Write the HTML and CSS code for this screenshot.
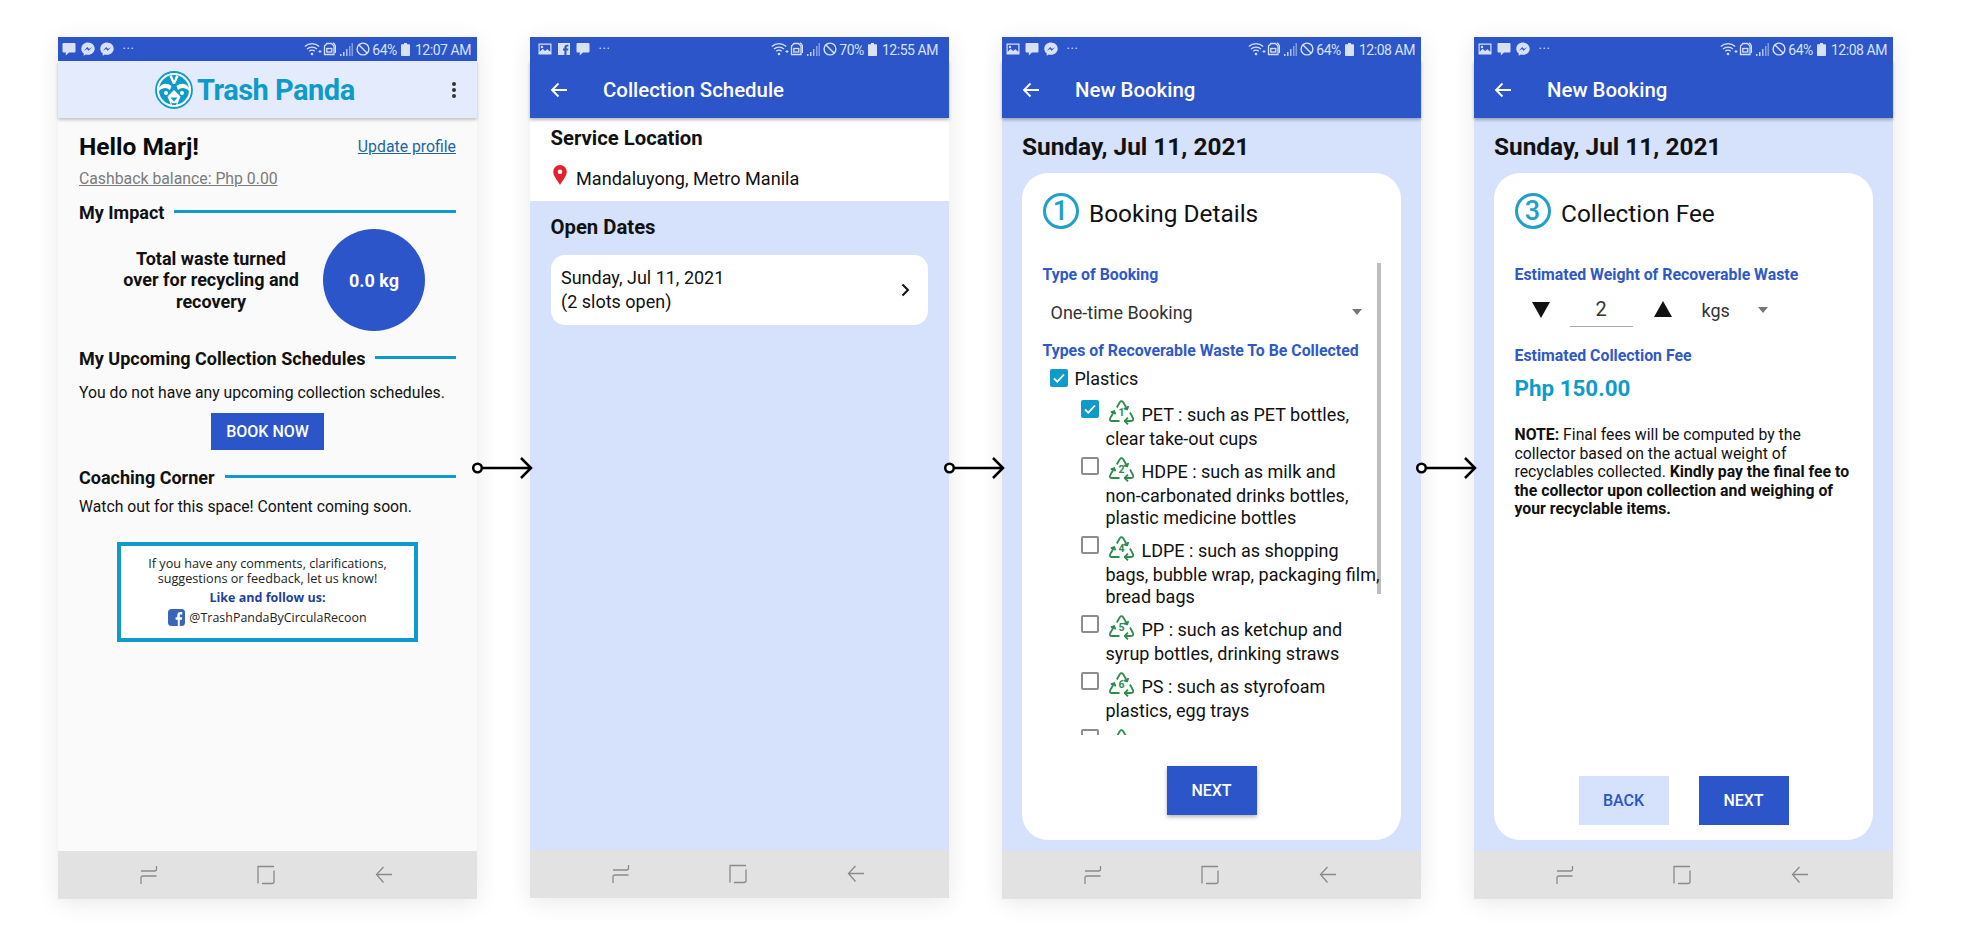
FILE: index.html
```html
<!DOCTYPE html>
<html lang="en">
<head>
<meta charset="utf-8">
<title>Trash Panda screens</title>
<link rel="stylesheet" href="styles.css">
</head>
<body>
<svg class="defs" aria-hidden="true">
  <symbol id="i-chat" viewBox="0 0 14 14"><path d="M1.500 1h11a1 1 0 0 1 1 1v7.500a1 1 0 0 1-1 1H7L3.800 13.600v-3.100H1.500a1 1 0 0 1-1-1V2a1 1 0 0 1 1-1z"/></symbol>
  <symbol id="i-msg" viewBox="0 0 14 14"><path fill-rule="evenodd" d="M7 .6C3.200.6.3 3.300.3 6.800c0 2 .9 3.600 2.400 4.700v2.200l2.200-1.200c.7.2 1.400.3 2.100.3 3.800 0 6.700-2.700 6.700-6S10.800.6 7 .6zM7.700 8.800 6 7 2.800 8.800 6.300 5.100 8 6.900l3.200-1.800z"/></symbol>
  <symbol id="i-img" viewBox="0 0 14 14"><path fill-rule="evenodd" d="M.5 1.500h13v11H.5zM1.700 2.700v7.100l3-3 2.300 2.300 2.300-1.800 3 2.400V2.700zM4 3.800a1.200 1.200 0 1 1 0 2.400 1.200 1.200 0 0 1 0-2.400z"/></symbol>
  <symbol id="i-fb" viewBox="0 0 14 14"><path fill-rule="evenodd" d="M1 1h12v12H9.500V8.500h1.600l.3-1.900H9.500V5.400c0-.6.2-.9.9-.9h1V2.800H10c-1.800 0-2.600 1-2.600 2.500v1.300H6v1.900h1.400V13H1z"/></symbol>
  <symbol id="i-wifi" viewBox="0 0 18 14"><g fill="none" stroke="currentColor" stroke-width="1.200"><path d="M.8 4.500C5 .6 11 .6 15.200 4.500"/><path d="M3 7c2.900-2.600 7.100-2.600 10 0"/><path d="M5.200 9.300c1.700-1.400 3.900-1.400 5.600 0"/></g><circle cx="8" cy="12" r="1.300" fill="currentColor"/><path d="M14.500 9.500h3M16 8v3" stroke="currentColor" fill="none" stroke-width="1"/></symbol>
  <symbol id="i-sim" viewBox="0 0 13 14"><g fill="none" stroke="currentColor" stroke-width="1.300"><path d="M4 1.500h4.500l2.500 2.500v8.500H1.500V4z"/><rect x="3.800" y="6.500" width="5" height="3.500"/><path d="M10 .8c1.300.6 2.200 1.700 2.400 3.200v7"/></g></symbol>
  <symbol id="i-sig" viewBox="0 0 13 13"><path d="M0 11h1.500v2H0z" opacity=".9"/><path d="M3 9h1.500v4H3z" opacity=".9"/><path d="M6 6h1.500v7H6z" opacity=".75"/><path d="M9 3h1.500v10H9z" opacity=".55"/><path d="M11.500 0H13v13h-1.500z" opacity=".5"/></symbol>
  <symbol id="i-block" viewBox="0 0 14 14"><g fill="none" stroke="currentColor" stroke-width="1.400"><circle cx="7" cy="7" r="5.900"/><path d="M3 3l8 8"/></g></symbol>
  <symbol id="i-batt" viewBox="0 0 9 13"><path d="M3 0h3v1.200h2.200a.8.8 0 0 1 .8.800v10.200a.8.8 0 0 1-.8.800H.8a.8.8 0 0 1-.8-.8V2a.8.8 0 0 1 .8-.8H3z"/></symbol>
  <symbol id="i-back" viewBox="0 0 18 16"><path d="M17 8H2M8.500 1.500 2 8l6.500 6.500" fill="none" stroke="currentColor" stroke-width="1.800"/></symbol>
  <symbol id="i-recents" viewBox="0 0 18 20"><path d="M1 6h13.500q2 0 2-2V1M16.500 11H3q-2 0-2 2v6" fill="none" stroke="currentColor" stroke-width="1.300"/></symbol>
  <symbol id="i-home" viewBox="0 0 18 20"><path d="M1 18.500V1.500H17M17 5.500V16.500q0 2-2 2H5" fill="none" stroke="currentColor" stroke-width="1.300"/></symbol>
  <symbol id="i-navback" viewBox="0 0 18 20"><path d="M17 9.500H2M8.500 2 1.500 9.500l7 8" fill="none" stroke="currentColor" stroke-width="1.300"/></symbol>
  <symbol id="i-rec" viewBox="0 0 25 26"><g fill="none" stroke="currentColor" stroke-width="1.800" stroke-linejoin="round"><path d="M7.800 7.500 10.800 2.200q1.700-2.200 3.400 0l3.800 6.600"/><path d="M14.700 8.400l3.500 1 1.100-3.400"/><path d="M21 12.500l3 5.500q1 3-2 3H16.500"/><path d="M19 17.700 15.700 21l3.300 3.300"/><path d="M10.500 21H3q-3 0-1.700-3L5 11.500"/><path d="M1.800 12.300 5.200 11l1.200 3.400"/></g></symbol>
</svg>

<main class="board">

  <section class="phone phone-home">
    <div class="status">
      <div class="status-left">
        <svg class="si"><use href="#i-chat"/></svg><svg class="si"><use href="#i-msg"/></svg><svg class="si"><use href="#i-msg"/></svg><span class="dots">•••</span>
      </div>
      <div class="status-right">
        <svg class="si-wifi"><use href="#i-wifi"/></svg><svg class="si-sim"><use href="#i-sim"/></svg><svg class="si-sig"><use href="#i-sig"/></svg><svg class="si-block"><use href="#i-block"/></svg><span class="pct">64%</span><svg class="si-batt"><use href="#i-batt"/></svg><span class="clock">12:07 AM</span>
      </div>
    </div>
    <header class="brandbar">
      <svg class="logo" viewBox="0 0 38 38" aria-hidden="true">
        <circle cx="19" cy="19" r="18" fill="#fff" stroke="#0f9bca" stroke-width="1.800"/>
        <circle cx="19" cy="19" r="15" fill="#0f9bca"/>
        <path d="M14.500 5.500 18 13h2l3.500-7.500-2.300-1.200L19 10l-2.200-5.700z" fill="#fff"/>
        <path d="M3.800 17C7 12 12 11.500 16.500 15L15 19c-3-2.500-7-3-11 1zM34.200 17C31 12 26 11.500 21.500 15L23 19c3-2.500 7-3 11 1z" fill="#fff"/>
        <path d="M19 19 25.500 25.500 22 34H16L12.500 25.500z" fill="#fff"/>
        <path d="M15.500 26.500h7L19 30.500z" fill="#0f9bca"/>
        <path d="M16 31.500c1.500 1 4.500 1 6 0l-1 2.500h-4z" fill="#0f9bca"/>
        <circle cx="11" cy="22" r="2" fill="#fff"/><circle cx="27" cy="22" r="2" fill="#fff"/>
      </svg>
      <span class="brandname">Trash Panda</span>
      <span class="kebab"><i></i><i></i><i></i></span>
    </header>
    <div class="home-body">
      <div class="hello-row">
        <h1 class="hello">Hello Marj!</h1>
        <a class="update">Update profile</a>
      </div>
      <p class="cashback">Cashback balance: Php 0.00</p>
      <h2 class="rule-head rule-first"><span>My Impact</span></h2>
      <div class="impact">
        <p class="impact-text">Total waste turned<br>over for recycling and<br>recovery</p>
        <div class="impact-circle">0.0 kg</div>
      </div>
      <h2 class="rule-head"><span>My Upcoming Collection Schedules</span></h2>
      <p class="para para-up">You do not have any upcoming collection schedules.</p>
      <button class="btn-book">BOOK NOW</button>
      <h2 class="rule-head"><span>Coaching Corner</span></h2>
      <p class="para para-watch">Watch out for this space! Content coming soon.</p>
      <div class="promo">
        <p>If you have any comments, clarifications,<br>suggestions or feedback, let us know!</p>
        <p class="promo-like">Like and follow us:</p>
        <p class="promo-fb">
          <svg class="fb" viewBox="0 0 17 17" aria-hidden="true"><rect width="17" height="17" rx="3.500" fill="#3a66b8"/><path d="M11.800 17v-6.300h2l.4-2.500h-2.400V6.700c0-.8.300-1.200 1.200-1.200h1.300V3.200c-.5 0-1.200-.1-1.900-.1-2 0-3.100 1.200-3.100 3.300v1.800H7.600v2.500h2.200V17z" fill="#fff"/></svg>
          <span>@TrashPandaByCirculaRecoon</span>
        </p>
      </div>
    </div>
    <nav class="navbar"><svg class="ni"><use href="#i-recents"/></svg><svg class="ni"><use href="#i-home"/></svg><svg class="ni"><use href="#i-navback"/></svg></nav>
  </section>

  <div class="link"><svg viewBox="0 0 58 24" class="link-svg" aria-hidden="true"><circle cx="5.500" cy="12" r="4.300" fill="#fff" stroke="#000" stroke-width="2.500"/><path d="M10 12c10 .3 20-.3 48 0M49 2l10 10-10 10" fill="none" stroke="#000" stroke-width="2.500"/></svg></div>

  <section class="phone phone-tint phone-short">
    <div class="status status-alt">
      <div class="status-left">
        <svg class="si"><use href="#i-img"/></svg><svg class="si"><use href="#i-fb"/></svg><svg class="si"><use href="#i-chat"/></svg><span class="dots">•••</span>
      </div>
      <div class="status-right">
        <svg class="si-wifi"><use href="#i-wifi"/></svg><svg class="si-sim"><use href="#i-sim"/></svg><svg class="si-sig"><use href="#i-sig"/></svg><svg class="si-block"><use href="#i-block"/></svg><span class="pct">70%</span><svg class="si-batt"><use href="#i-batt"/></svg><span class="clock">12:55 AM</span>
      </div>
    </div>
    <header class="appbar"><svg class="back"><use href="#i-back"/></svg><span class="appbar-title">Collection Schedule</span></header>
    <div class="loc">
      <h2 class="sub-head">Service Location</h2>
      <p class="loc-row">
        <svg class="pin" viewBox="0 0 14 20" aria-hidden="true"><path fill-rule="evenodd" d="M7 0a6.800 6.800 0 0 1 6.800 6.800C13.800 11 9.500 15.500 7 20 4.500 15.500.2 11 .2 6.800A6.800 6.800 0 0 1 7 0zm0 4.500a2.300 2.300 0 1 0 0 4.600 2.300 2.300 0 0 0 0-4.600z" fill="#e5202e"/></svg>
        <span>Mandaluyong, Metro Manila</span>
      </p>
    </div>
    <div class="dates">
      <h2 class="sub-head">Open Dates</h2>
      <div class="date-card">
        <p>Sunday, Jul 11, 2021<br>(2 slots open)</p>
        <svg class="chev" viewBox="0 0 9 14" aria-hidden="true"><path d="M1.500 1.500 7 7l-5.500 5.500" fill="none" stroke="#111" stroke-width="2"/></svg>
      </div>
    </div>
    <nav class="navbar"><svg class="ni"><use href="#i-recents"/></svg><svg class="ni"><use href="#i-home"/></svg><svg class="ni"><use href="#i-navback"/></svg></nav>
  </section>

  <div class="link"><svg viewBox="0 0 58 24" class="link-svg" aria-hidden="true"><circle cx="5.500" cy="12" r="4.300" fill="#fff" stroke="#000" stroke-width="2.500"/><path d="M10 12c10 .3 20-.3 48 0M49 2l10 10-10 10" fill="none" stroke="#000" stroke-width="2.500"/></svg></div>

  <section class="phone phone-tint">
    <div class="status">
      <div class="status-left">
        <svg class="si"><use href="#i-img"/></svg><svg class="si"><use href="#i-chat"/></svg><svg class="si"><use href="#i-msg"/></svg><span class="dots">•••</span>
      </div>
      <div class="status-right">
        <svg class="si-wifi"><use href="#i-wifi"/></svg><svg class="si-sim"><use href="#i-sim"/></svg><svg class="si-sig"><use href="#i-sig"/></svg><svg class="si-block"><use href="#i-block"/></svg><span class="pct">64%</span><svg class="si-batt"><use href="#i-batt"/></svg><span class="clock">12:08 AM</span>
      </div>
    </div>
    <header class="appbar"><svg class="back"><use href="#i-back"/></svg><span class="appbar-title">New Booking</span></header>
    <h1 class="date-title">Sunday, Jul 11, 2021</h1>
    <div class="card card-one">
      <div class="step-head"><span class="step-num">1</span><span class="step-title">Booking Details</span></div>
      <h3 class="field-label label-first">Type of Booking</h3>
      <div class="select"><span>One-time Booking</span><i class="caret"></i></div>
      <h3 class="field-label label-types">Types of Recoverable Waste To Be Collected</h3>
      <div class="waste-list">
        <div class="plastics"><span class="cb cb-on"><svg viewBox="0 0 18 18" aria-hidden="true"><path d="M4 9.500l3.300 3.200L14 5.500" fill="none" stroke="#fff" stroke-width="1.800"/></svg></span><span>Plastics</span></div>
        <div class="waste"><span class="cb cb-on"><svg viewBox="0 0 18 18" aria-hidden="true"><path d="M4 9.500l3.300 3.200L14 5.500" fill="none" stroke="#fff" stroke-width="1.800"/></svg></span>
          <p><svg class="rec" viewBox="0 0 25 26" aria-hidden="true"><use href="#i-rec"/><text x="12.500" y="16" class="rec-num">1</text></svg>PET : such as PET bottles,<br>clear take-out cups</p></div>
        <div class="waste"><span class="cb"></span>
          <p><svg class="rec" viewBox="0 0 25 26" aria-hidden="true"><use href="#i-rec"/><text x="12.500" y="16" class="rec-num">2</text></svg>HDPE : such as milk and<br>non-carbonated drinks bottles,<br>plastic medicine bottles</p></div>
        <div class="waste"><span class="cb"></span>
          <p><svg class="rec" viewBox="0 0 25 26" aria-hidden="true"><use href="#i-rec"/><text x="12.500" y="16" class="rec-num">4</text></svg>LDPE : such as shopping<br>bags, bubble wrap, packaging film,<br>bread bags</p></div>
        <div class="waste"><span class="cb"></span>
          <p><svg class="rec" viewBox="0 0 25 26" aria-hidden="true"><use href="#i-rec"/><text x="12.500" y="16" class="rec-num">5</text></svg>PP : such as ketchup and<br>syrup bottles, drinking straws</p></div>
        <div class="waste"><span class="cb"></span>
          <p><svg class="rec" viewBox="0 0 25 26" aria-hidden="true"><use href="#i-rec"/><text x="12.500" y="16" class="rec-num">6</text></svg>PS : such as styrofoam<br>plastics, egg trays</p></div>
        <div class="waste"><span class="cb"></span>
          <p><svg class="rec" viewBox="0 0 25 26" aria-hidden="true"><use href="#i-rec"/></svg></p></div>
      </div>
      <i class="scrollbar"></i>
      <div class="actions"><button class="btn btn-primary btn-raised">NEXT</button></div>
    </div>
    <nav class="navbar"><svg class="ni"><use href="#i-recents"/></svg><svg class="ni"><use href="#i-home"/></svg><svg class="ni"><use href="#i-navback"/></svg></nav>
  </section>

  <div class="link"><svg viewBox="0 0 58 24" class="link-svg" aria-hidden="true"><circle cx="5.500" cy="12" r="4.300" fill="#fff" stroke="#000" stroke-width="2.500"/><path d="M10 12c10 .3 20-.3 48 0M49 2l10 10-10 10" fill="none" stroke="#000" stroke-width="2.500"/></svg></div>

  <section class="phone phone-tint">
    <div class="status">
      <div class="status-left">
        <svg class="si"><use href="#i-img"/></svg><svg class="si"><use href="#i-chat"/></svg><svg class="si"><use href="#i-msg"/></svg><span class="dots">•••</span>
      </div>
      <div class="status-right">
        <svg class="si-wifi"><use href="#i-wifi"/></svg><svg class="si-sim"><use href="#i-sim"/></svg><svg class="si-sig"><use href="#i-sig"/></svg><svg class="si-block"><use href="#i-block"/></svg><span class="pct">64%</span><svg class="si-batt"><use href="#i-batt"/></svg><span class="clock">12:08 AM</span>
      </div>
    </div>
    <header class="appbar"><svg class="back"><use href="#i-back"/></svg><span class="appbar-title">New Booking</span></header>
    <h1 class="date-title">Sunday, Jul 11, 2021</h1>
    <div class="card card-three">
      <div class="step-head"><span class="step-num">3</span><span class="step-title">Collection Fee</span></div>
      <h3 class="field-label label-first">Estimated Weight of Recoverable Waste</h3>
      <div class="stepper">
        <i class="tri tri-down"></i>
        <span class="qty">2</span>
        <i class="tri tri-up"></i>
        <span class="unit">kgs</span>
        <i class="caret caret-unit"></i>
      </div>
      <h3 class="field-label label-fee">Estimated Collection Fee</h3>
      <p class="fee">Php 150.00</p>
      <p class="note"><b>NOTE:</b> Final fees will be computed by the<br>collector based on the actual weight of<br>recyclables collected. <b>Kindly pay the final fee to<br>the collector upon collection and weighing of<br>your recyclable items.</b></p>
      <div class="actions actions-two"><button class="btn btn-soft">BACK</button><button class="btn btn-primary">NEXT</button></div>
    </div>
    <nav class="navbar"><svg class="ni"><use href="#i-recents"/></svg><svg class="ni"><use href="#i-home"/></svg><svg class="ni"><use href="#i-navback"/></svg></nav>
  </section>

</main>
</body>
</html>
```
FILE: styles.css
```css
* { box-sizing: border-box; }
html, body { margin: 0; padding: 0; background: #fff; }
body { font-family: Roboto, "Liberation Sans", sans-serif; color: #111; overflow: hidden; }
h1, h2, h3, p { margin: 0; }
.defs { width: 0; height: 0; position: absolute; }

.board { display: flex; padding: 37px 0 0 58px; height: 947px; align-items: flex-start; }
.phone { width: 419px; height: 862px; display: flex; flex-direction: column; box-shadow: 0 4px 22px rgba(0,0,0,.09); background: #fafafa; flex: none; }
.phone-tint { background: #d6e1fb; }
.phone-short { height: 860.500px; }
.link { width: 53px; height: 862px; flex: none; display: flex; align-items: center; position: relative; z-index: 2; }
.link-svg { width: 58px; height: 24px; margin-left: -5px; flex: none; overflow: visible; }

/* status bar */
.status { height: 24px; flex: none; background: #2b55c9; color: #d8e1f7; display: flex; justify-content: space-between; align-items: center; padding: 0 6px 0 4px; font-size: 14px; letter-spacing: -.45px; }
.status-alt { padding: 0 11px 0 8px; }
.status-left, .status-right { display: flex; align-items: center; }
.status svg { fill: currentColor; flex: none; }
.si { width: 14px; height: 14px; margin-right: 5px; }
.dots { font-size: 7px; letter-spacing: 1.700px; margin-left: 4px; line-height: 1; }
.si-wifi { width: 18px; height: 14px; }
.si-sim { width: 13px; height: 14px; margin-left: 1px; }
.si-sig { width: 13px; height: 13px; margin-left: 4px; }
.si-block { width: 14px; height: 14px; margin: 0 2.500px 0 3px; }
.si-batt { width: 9px; height: 13px; margin: 0 5px 0 4px; }
.pct, .clock { white-space: nowrap; padding-top: 2px; }

/* bars */
.brandbar { height: 57px; flex: none; background: #e4ebfd; display: flex; align-items: center; padding-left: 97px; position: relative; box-shadow: 0 2px 3px rgba(0,0,0,.22); z-index: 1; }
.logo { width: 38px; height: 38px; flex: none; }
.brandname { font-size: 29px; font-weight: 700; color: #0f9bca; margin-left: 4px; letter-spacing: -.5px; line-height: 38px; white-space: nowrap; }
.kebab { display: flex; flex-direction: column; gap: 1.700px; margin-left: auto; margin-right: 21px; margin-top: 1px; }
.kebab i { width: 4.500px; height: 4.500px; border-radius: 50%; background: #333; display: block; }
.appbar { height: 57px; flex: none; background: #2b55c9; display: flex; align-items: center; padding-left: 20px; box-shadow: 0 2px 3px rgba(0,0,0,.28); position: relative; z-index: 1; }
.back { width: 18px; height: 16px; color: #fff; flex: none; margin-right: 35px; }
.appbar-title { color: #fff; font-size: 20.400px; font-weight: 500; line-height: 26px; }
.navbar { height: 48px; flex: none; margin-top: auto; background: #e2e2e2; color: #8a8a8a; display: grid; grid-template-columns: repeat(3, 117.500px); justify-items: center; align-items: center; padding-left: 32px; }
.ni { width: 18px; height: 20px; }

/* home */
.home-body { padding: 0 21px; display: flex; flex-direction: column; }
.hello-row { display: flex; justify-content: space-between; align-items: center; margin-top: 15px; height: 28px; }
.hello { font-size: 24.500px; font-weight: 700; line-height: 28px; color: #0a0a0a; }
.update { font-size: 15.800px; color: #1a66a8; text-decoration: underline; margin-top: -2px; }
.cashback { font-size: 15.800px; line-height: 20px; margin-top: 8px; color: #7b7b7b; text-decoration: underline; }
.rule-head { display: flex; align-items: center; gap: 10px; font-size: 18px; font-weight: 700; line-height: 22px; margin-top: 17px; white-space: nowrap; }
.rule-first { margin-top: 13px; }
.rule-head::after { content: ""; flex: 1; height: 3px; background: #0f9bca; margin-top: -3px; }
.impact { display: flex; align-items: center; margin-top: 5px; padding-left: 38px; gap: 18px; }
.impact-text { width: 188px; text-align: center; font-size: 18px; font-weight: 700; line-height: 21.500px; }
.impact-circle { width: 102px; height: 102px; border-radius: 50%; background: #2b55c9; color: #fff; display: flex; align-items: center; justify-content: center; font-size: 18px; font-weight: 700; flex: none; }
.para { font-size: 15.750px; line-height: 20px; }
.para-up { margin-top: 13px; }
.para-watch { margin-top: 8px; }
.btn-book { width: 113px; height: 37px; margin: 10px auto 0; border: 0; background: #2b55c9; color: #fff; font: 500 16px Roboto, sans-serif; }
.promo { width: 301px; height: 100px; margin: 25px auto 0; border: 4px solid #0f9bca; background: #fff; display: flex; flex-direction: column; align-items: center; padding-top: 10px; font-family: "Open Sans", sans-serif; font-size: 12.650px; line-height: 15px; text-align: center; color: #222; }
.promo-like { font-size: 12.500px; font-weight: 700; color: #1f3f9c; margin-top: 4px; }
.promo-fb { display: flex; align-items: center; gap: 4px; margin-top: 4px; font-size: 12.450px; }
.fb { width: 17px; height: 17px; flex: none; }

/* schedule */
.sub-head { font-size: 20.300px; font-weight: 700; line-height: 24px; }
.loc { background: #fff; padding: 8px 20px 10px 20.500px; }
.loc-row { display: flex; align-items: center; margin-top: 17px; font-size: 18.100px; line-height: 24px; }
.pin { width: 14px; height: 20px; flex: none; margin: -8px 9.500px 0 2px; }
.dates { padding: 14px 21px 0 20.500px; }
.date-card { margin-top: 16px; height: 70px; background: #fff; border-radius: 14px; padding: 0 14px 0 10.500px; display: flex; align-items: center; justify-content: space-between; font-size: 18px; line-height: 24.500px; }
.chev { width: 9px; height: 14px; margin-right: 4px; }

/* booking */
.date-title { font-size: 24.400px; font-weight: 700; line-height: 30px; margin: 14px 20px 0; white-space: nowrap; }
.card { flex: 1; margin: 11px 20px 11px; background: #fff; border-radius: 26px; padding: 20px 20.500px 0; display: flex; flex-direction: column; position: relative; min-height: 0; }
.step-head { display: flex; align-items: center; height: 36px; flex: none; }
.step-num { width: 36px; height: 36px; border: 3px solid #1f9fca; border-radius: 50%; color: #1f9fca; font-size: 27px; font-weight: 500; display: flex; align-items: center; justify-content: center; flex: none; }
.step-title { font-size: 24.400px; line-height: 36px; margin: 6px 0 0 10.500px; white-space: nowrap; }
.field-label { font-size: 15.850px; font-weight: 700; line-height: 20px; color: #2f59c8; white-space: nowrap; flex: none; }
.label-first { margin-top: 36px; }
.label-types { margin-top: 16px; }
.label-fee { margin-top: 19px; }
.select { display: flex; align-items: center; height: 26px; margin-top: 14px; padding: 0 19px 0 8px; font-size: 18px; color: #333; flex: none; white-space: nowrap; justify-content: space-between; }
.caret { width: 0; height: 0; border-left: 5.500px solid transparent; border-right: 5.500px solid transparent; border-top: 6px solid #777; display: block; }
.waste-list { height: 374px; overflow: hidden; flex: none; font-size: 18px; white-space: nowrap; padding-top: 6px; margin-right: -10px; position: relative; z-index: 1; }
.plastics { display: flex; align-items: center; height: 22px; margin-left: 7px; gap: 7px; }
.cb { width: 18px; height: 18px; border: 2px solid #8d8d8d; border-radius: 2px; flex: none; display: block; background: #fff; }
.cb-on { border: 0; background: #0f9bca; border-radius: 2px; }
.cb-on svg { width: 18px; height: 18px; display: block; }
.waste { display: flex; margin: 11px 0 0 38px; gap: 7px; }
.plastics + .waste { margin-top: 15px; }
.waste .cb { margin-top: -4px; }
.waste p { line-height: 22px; }
.rec { width: 25px; height: 26px; color: #2e8b4e; vertical-align: -7px; margin: -5px 8px 2px 3px; display: inline-block; }
.rec-num { font: 700 10.500px Roboto, sans-serif; fill: #2e8b4e; text-anchor: middle; }
.scrollbar { position: absolute; left: 355px; top: 90px; width: 4px; height: 331px; background: #bdbdbd; }
.actions { display: flex; justify-content: center; margin-top: 31px; flex: none; }
.actions-two { margin-top: auto; margin-bottom: 15px; gap: 30px; }
.btn { width: 90px; height: 49px; border: 0; font: 500 16px Roboto, sans-serif; }
.btn-primary { background: #2b55c9; color: #fff; }
.btn-raised { box-shadow: 0 2px 4px rgba(0,0,0,.3); }
.btn-soft { background: #d6e1fb; color: #2b55c9; }

/* fee */
.stepper { display: flex; align-items: center; height: 34px; margin-top: 8px; flex: none; padding-left: 17px; }
.tri { width: 0; height: 0; display: block; border-left: 9px solid transparent; border-right: 9px solid transparent; }
.tri-down { border-top: 16px solid #111; }
.tri-up { border-bottom: 16px solid #111; margin-top: -2px; }
.qty { width: 63px; height: 34px; margin: 0 21px 0 20px; text-align: center; font-size: 20px; line-height: 32px; color: #333; border-bottom: 1.500px solid #aaa; }
.unit { font-size: 18px; color: #333; margin-left: 30px; width: 31px; }
.caret-unit { margin-left: 25px; }
.fee { font-size: 22.400px; font-weight: 700; line-height: 28px; margin-top: 8px; color: #0f9bca; white-space: nowrap; flex: none; }
.note { font-size: 15.800px; line-height: 18.500px; margin-top: 24px; white-space: nowrap; flex: none; }
```
